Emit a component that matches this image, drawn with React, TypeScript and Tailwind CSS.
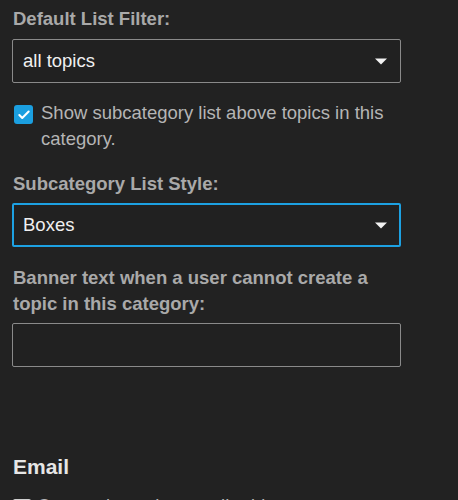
import { Check } from "lucide-react";

function Caret() {
  return (
    <svg width="12" height="7" viewBox="0 0 12 7" className="shrink-0">
      <path d="M0 0.5 L12 0.5 L6 6.5 Z" fill="#f2f2f2" />
    </svg>
  );
}

function SelectBox({ value, focused }: { value: string; focused?: boolean }) {
  return (
    <div
      className={
        focused
          ? "w-[389px] h-[44px] rounded-[2px] border-2 border-[#1da1e2] bg-[#212121] flex items-center justify-between pl-[9px] pr-[12px]"
          : "w-[389px] h-[44px] rounded-[2px] border border-[#8a8a8a] bg-[#212121] flex items-center justify-between pl-[10px] pr-[13px]"
      }
    >
      <span className="text-[18.5px] leading-[26px] text-[#f0f0f0]">{value}</span>
      <Caret />
    </div>
  );
}

export default function App() {
  return (
    <div
      className="min-h-screen bg-[#222222] pl-[13px] pt-[6px]"
      style={{ fontFamily: "'Liberation Sans', Arial, sans-serif" }}
    >
      <div className="flex flex-col w-[389px] -ml-[1px]">
        {/* Default list filter */}
        <label className="pl-[1px] text-[18.5px] leading-[26px] font-bold text-[#a9a9a9] mb-[7px]">
          Default List Filter:
        </label>
        <SelectBox value="all topics" />

        {/* Show subcategory list */}
        <div className="flex items-start gap-[8px] mt-[17px] pl-[2px]">
          <div className="mt-[5px] w-[19px] h-[19px] rounded-[3px] bg-[#1b9fe0] flex items-center justify-center shrink-0">
            <Check size={14} color="#ffffff" strokeWidth={3.5} />
          </div>
          <p className="text-[18.5px] leading-[26px] text-[#b5b5b5] w-[360px]">
            Show subcategory list above topics in this category.
          </p>
        </div>

        {/* Subcategory list style */}
        <label className="pl-[1px] mt-[19px] text-[18.5px] leading-[26px] font-bold text-[#a9a9a9] mb-[6px]">
          Subcategory List Style:
        </label>
        <SelectBox value="Boxes" focused />

        {/* Banner text */}
        <label className="pl-[1px] mt-[18px] text-[18.5px] leading-[26px] font-bold text-[#a9a9a9] mb-[6px]">
          Banner text when a user cannot create a topic in this category:
        </label>
        <div className="w-[389px] h-[44px] rounded-[2px] border border-[#8a8a8a] bg-[#212121]" />

        {/* Email section */}
        <h3 className="pl-[1px] mt-[86px] text-[21px] leading-[28px] font-bold text-[#e6e6e6]">
          Email
        </h3>
        <div className="flex items-start gap-[6px] mt-[12px] pl-[1px]">
          <div className="mt-[6px] w-[18px] h-[18px] rounded-[2px] bg-[#d0d0d0] shrink-0" />
          <p className="text-[18.5px] leading-[26px] text-[#b5b5b5]">
            Custom incoming email address:
          </p>
        </div>
        <div className="h-[40px]" />
      </div>
    </div>
  );
}
